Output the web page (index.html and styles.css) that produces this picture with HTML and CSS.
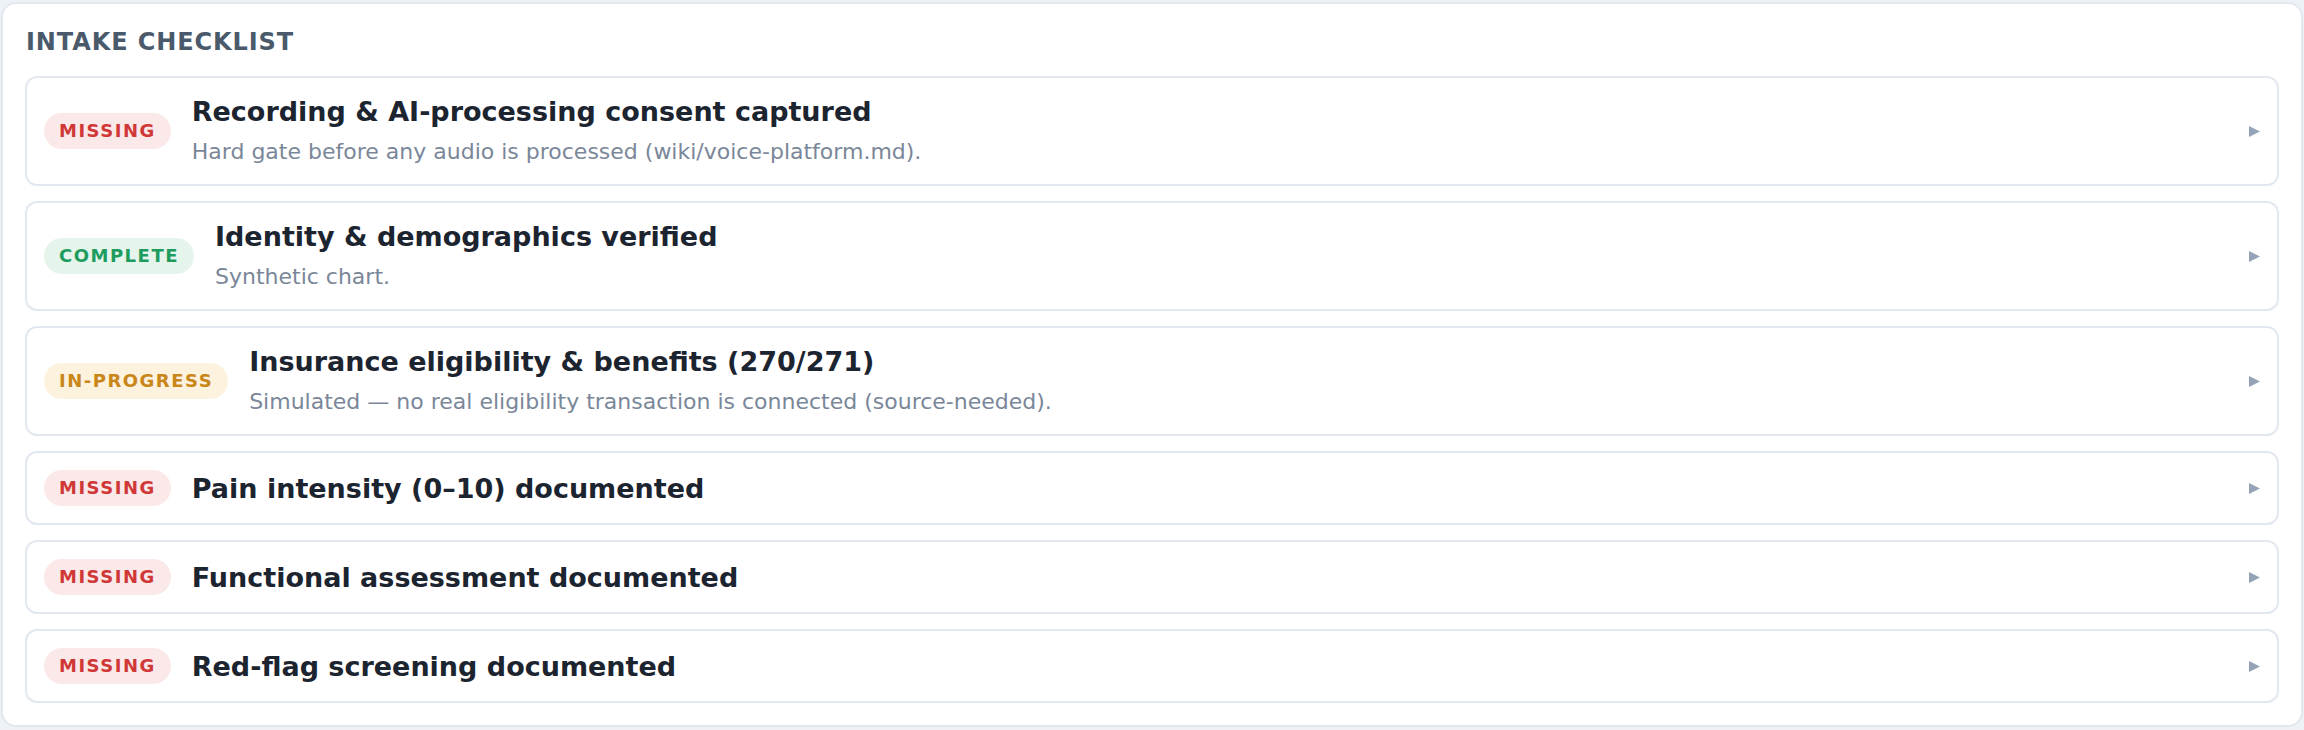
FILE: index.html
```html
<!DOCTYPE html>
<html lang="en">
<head>
  <meta charset="UTF-8">
  <meta name="viewport" content="width=device-width, initial-scale=1.0">
  <title>Intake Checklist</title>
  <link rel="stylesheet" href="styles.css">
</head>
<body>
  <div class="panel">
    <h2 class="panel-title">Intake Checklist</h2>

    <div class="list">
      <div class="item">
        <span class="badge missing">Missing</span>
        <div class="item-body">
          <div class="item-title">Recording &amp; AI-processing consent captured</div>
          <div class="item-sub">Hard gate before any audio is processed (wiki/voice-platform.md).</div>
        </div>
        <svg class="arrow" width="11" height="11" viewBox="0 0 11 11"><polygon points="0,0 11,5.5 0,11"/></svg>
      </div>

      <div class="item">
        <span class="badge complete">Complete</span>
        <div class="item-body">
          <div class="item-title">Identity &amp; demographics verified</div>
          <div class="item-sub">Synthetic chart.</div>
        </div>
        <svg class="arrow" width="11" height="11" viewBox="0 0 11 11"><polygon points="0,0 11,5.5 0,11"/></svg>
      </div>

      <div class="item">
        <span class="badge progress">In-progress</span>
        <div class="item-body">
          <div class="item-title">Insurance eligibility &amp; benefits (270/271)</div>
          <div class="item-sub">Simulated — no real eligibility transaction is connected (source-needed).</div>
        </div>
        <svg class="arrow" width="11" height="11" viewBox="0 0 11 11"><polygon points="0,0 11,5.5 0,11"/></svg>
      </div>

      <div class="item">
        <span class="badge missing">Missing</span>
        <div class="item-body">
          <div class="item-title">Pain intensity (0–10) documented</div>
        </div>
        <svg class="arrow" width="11" height="11" viewBox="0 0 11 11"><polygon points="0,0 11,5.5 0,11"/></svg>
      </div>

      <div class="item">
        <span class="badge missing">Missing</span>
        <div class="item-body">
          <div class="item-title">Functional assessment documented</div>
        </div>
        <svg class="arrow" width="11" height="11" viewBox="0 0 11 11"><polygon points="0,0 11,5.5 0,11"/></svg>
      </div>

      <div class="item">
        <span class="badge missing">Missing</span>
        <div class="item-body">
          <div class="item-title">Red-flag screening documented</div>
        </div>
        <svg class="arrow" width="11" height="11" viewBox="0 0 11 11"><polygon points="0,0 11,5.5 0,11"/></svg>
      </div>
    </div>
  </div>
</body>
</html>
```

FILE: styles.css
```css
body {
  margin: 0;
  padding: 2px 1px;
  font-family: "DejaVu Sans", Verdana, sans-serif;
  background-color: #eef2f6;
}
.panel {
  background: white;
  border: 2px solid #e2e8f0;
  border-radius: 15px;
  padding: 24px 22px 22px 22px;
}
.panel-title {
  margin: 0 0 20px 1px;
  font-size: 24px;
  line-height: 28px;
  letter-spacing: 0.9px;
  text-transform: uppercase;
  color: #4a5a6b;
}
.list {
  display: flex;
  flex-direction: column;
  gap: 15px;
}
.item {
  display: flex;
  align-items: center;
  gap: 21px;
  padding: 17px;
  border: 2px solid #e2e8f0;
  border-radius: 12px;
}
.badge {
  flex: none;
  height: 36px;
  line-height: 36px;
  padding: 0 15px;
  border-radius: 18px;
  font-size: 18px;
  font-weight: bold;
  letter-spacing: 1.5px;
  text-transform: uppercase;
}
.badge.missing {
  color: #d03737;
  background: #fbe8e8;
}
.badge.complete {
  color: #1e9c5e;
  background: #e5f5ec;
}
.badge.progress {
  color: #c98619;
  background: #fcf2de;
}
.item-body {
  flex: 1;
}
.item-title {
  font-size: 27px;
  line-height: 33px;
  font-weight: bold;
  color: #1c2430;
}
.item-sub {
  margin-top: 9px;
  font-size: 22px;
  line-height: 30px;
  color: #7a8799;
}
.arrow {
  flex: none;
  fill: #94a3b8;
}
```
